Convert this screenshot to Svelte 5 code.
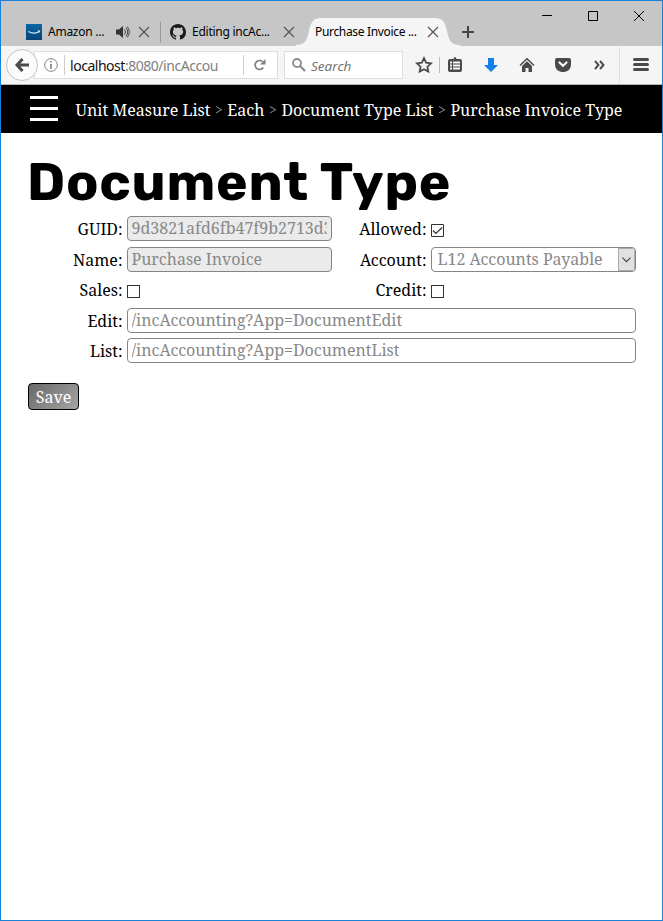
<script>
  const tabs = [
    { title: 'Amazon ...', kind: 'amazon' },
    { title: 'Editing incAc...', kind: 'github' },
    { title: 'Purchase Invoice ...', kind: 'active' }
  ];
  const crumbs = ['Unit Measure List', 'Each', 'Document Type List', 'Purchase Invoice Type'];
</script>

{#snippet cross()}
  <svg class="cross" width="12" height="12" viewBox="0 0 12 12"><path d="M1 1l10 10M11 1L1 11" stroke="#555" stroke-width="1.2" fill="none" /></svg>
{/snippet}

<div class="window">
  <div class="strip">
    {#each tabs as tab}
      <div class="tab {tab.kind}">
        {#if tab.kind === 'active'}
          <svg class="shape" width="164" height="29" viewBox="0 0 164 29"><path d="M0 29V28C9 28 11 23 13 14C15 4 18 1 25 1H139C146 1 149 4 151 14C153 23 155 28 164 28V29Z" fill="#f5f5f5" /></svg>
        {:else if tab.kind === 'amazon'}
          <svg class="fav" width="16" height="16" viewBox="0 0 16 16"><defs><linearGradient id="az" x2="0" y2="1"><stop stop-color="#0b66a6" /><stop offset="1" stop-color="#084475" /></linearGradient></defs><path d="M0 0h16v16H0z" fill="url(#az)" /><path d="M2.500 7.500q5.300 3.200 10.800.3M11.800 7.200l1.500 0-.3 1.200" fill="none" stroke="#d9f3fb" stroke-width="1.200" /></svg>
        {:else}
          <svg class="fav" width="16" height="16" viewBox="0 0 16 16"><path fill="#1b1b1b" d="M8 0C3.58 0 0 3.58 0 8c0 3.54 2.29 6.53 5.47 7.59.4.07.55-.17.55-.38 0-.19-.01-.82-.01-1.49-2.01.37-2.53-.49-2.69-.94-.09-.23-.48-.94-.82-1.13-.28-.15-.68-.52-.01-.53.63-.01 1.08.58 1.23.82.72 1.21 1.87.87 2.33.66.07-.52.28-.87.51-1.07-1.78-.2-3.64-.89-3.64-3.95 0-.87.31-1.59.82-2.15-.08-.2-.36-1.02.08-2.12 0 0 .67-.21 2.2.82.64-.18 1.32-.27 2-.27s1.36.09 2 .27c1.53-1.04 2.2-.82 2.2-.82.44 1.1.16 1.92.08 2.12.51.56.82 1.27.82 2.15 0 3.07-1.87 3.75-3.65 3.95.29.25.54.73.54 1.48 0 1.07-.01 1.93-.01 2.2 0 .21.15.46.55.38A8.01 8.01 0 0 0 16 8c0-4.42-3.58-8-8-8z" /></svg>
        {/if}
        <span class="title">{tab.title}</span>
        {#if tab.kind === 'amazon'}
          <svg class="sound" width="14" height="12" viewBox="0 0 14 12"><path d="M0 3.500h3L7 0v12L3 8.500H0z" fill="#333" /><path d="M8.500 3.500q2 2.500 0 5M10 1.800q3.500 4.200 0 8.400M11.300.7q4 5.300 0 10.600" fill="none" stroke="#444" /></svg>
        {/if}
        {@render cross()}
      </div>
    {/each}
    <svg class="plus" width="12" height="12" viewBox="0 0 12 12"><path d="M6 0v12M0 6h12" stroke="#444" stroke-width="2" /></svg>
    <div class="controls">
      <svg width="102" height="11" viewBox="0 0 102 11" fill="none" stroke="#000"><path d="M0 4.500h10M46.500.500h9v9h-9zM92 0l10 10M102 0L92 10" /></svg>
    </div>
  </div>

  <div class="toolbar">
    <div class="back"><svg width="14" height="14" viewBox="0 0 14 14"><path d="M7.500 1L2 7l5.500 6M2.500 7H14" fill="none" stroke="#4a4a4a" stroke-width="3" /></svg></div>
    <div class="address">
      <svg class="info" width="14" height="14" viewBox="0 0 14 14"><circle cx="7" cy="7" r="6.300" fill="none" stroke="#808080" /><path d="M7 3v1.600M7 6v5" stroke="#777" stroke-width="1.500" /></svg>
      <span class="url">localhost<i>:8080/incAccou</i></span>
      <svg class="reload" width="12" height="12" viewBox="0 0 12 12"><path d="M9.300 8.600A4.500 4.500 0 1 1 8.600 2.600" fill="none" stroke="#808080" stroke-width="1.700" /><path d="M11.500 0v5.500H6z" fill="#808080" /></svg>
    </div>
    <div class="search">
      <svg width="14" height="14" viewBox="0 0 14 14" fill="none" stroke="#8b8b8b"><circle cx="5" cy="5" r="4" stroke-width="1.800" /><path d="M8 8l5 5" stroke-width="2.300" /></svg>
      <span>Search</span>
    </div>
    <div class="icons">
      <svg width="252" height="38" viewBox="0 0 252 38">
        <path d="M19 12.200l2.100 4.500 4.900.6-3.600 3.400.9 4.900-4.300-2.400-4.300 2.400.9-4.900-3.600-3.400 4.900-.6z" fill="none" stroke="#4a4a4a" stroke-width="1.800" />
        <path d="M34.500 11v16" stroke="#bbb" />
        <path d="M45 13h3.500q.5-2 1.500-2t1.500 2H55q2 0 2 2v9q0 2-2 2H45q-2 0-2-2v-9q0-2 2-2z" fill="#4a4a4a" /><path d="M45 16.500h2M48 16.500h7M45 19.500h2M48 19.500h7M45 22.500h2M48 22.500h7" stroke="#f5f5f5" stroke-width="1.800" />
        <path d="M83 12h6v7h4l-7 7-7-7h4z" fill="#1581e8" />
        <path d="M115 19.500l7-6.800 7 6.800" fill="none" stroke="#4a4a4a" stroke-width="1.500" /><path d="M117 20l5-4.700 5 4.700v6h-3.500v-4h-3v4H117z" fill="#4a4a4a" />
        <path d="M152 12h12q2 0 2 2v4q0 6-5 7.500-3 1-6 0-5-1.500-5-7.500v-4q0-2 2-2z" fill="#4a4a4a" /><path d="M154.500 16.500l3.500 3.300 3.500-3.300" fill="none" stroke="#fff" stroke-width="2.200" stroke-linecap="round" />
        <path d="M190 15l3.500 4-3.500 4M195 15l3.500 4-3.500 4" fill="none" stroke="#4a4a4a" stroke-width="1.900" />
        <path d="M214.500 1v36" stroke="#ddd" />
        <path d="M229.500 13.500h13M229.500 18.500h13M229.500 23.500h13" stroke="#4a4a4a" stroke-width="3" stroke-linecap="round" />
      </svg>
    </div>
  </div>

  <nav>
    <svg width="28" height="26" viewBox="0 0 28 26"><path d="M0 1.500h28M0 12.500h28M0 23.500h28" stroke="#fff" stroke-width="3" /></svg>
    <div class="crumbs">
      {#each crumbs as crumb, i}{#if i}<span class="sep">&gt;</span>{/if}<span class="crumb">{crumb}</span>{/each}
    </div>
  </nav>

  <main>
    <h1>Document Type</h1>
    <div class="form">
      <span class="label">GUID:</span>
      <div class="field muted"><span class="clip">9d3821afd6fb47f9b2713d3</span></div>
      <span class="label">Allowed:</span>
      <div class="check"><svg width="13" height="13" viewBox="0 0 13 13" fill="none" stroke="#333"><path d="M.5.500h12v12H.500z" /><path d="M2 6.500l2.900 2.900L11.200 3.500" stroke-width="1.300" /></svg></div>

      <span class="label">Name:</span>
      <div class="field muted"><span class="clip">Purchase Invoice</span></div>
      <span class="label">Account:</span>
      <div class="field select"><span class="clip">L12 Accounts Payable</span><div class="arrow"><svg width="9" height="6" viewBox="0 0 9 6"><path d="M.5.700l4 4 4-4" fill="none" stroke="#444" stroke-width="1.200" /></svg></div></div>

      <span class="label raised">Sales:</span>
      <div class="check low"><div class="box"></div></div>
      <span class="label raised">Credit:</span>
      <div class="check low"><div class="box"></div></div>

      <span class="label">Edit:</span>
      <div class="field wide"><span class="clip">/incAccounting?App=DocumentEdit</span></div>
      <span class="label">List:</span>
      <div class="field wide"><span class="clip">/incAccounting?App=DocumentList</span></div>
    </div>
    <button>Save</button>
  </main>
</div>

<style>
  .window { box-sizing: border-box; width: 663px; height: 921px; border: 1px solid #1a82d6; background: #fff; font: 16px/24px "Noto Serif", "Droid Serif", "DejaVu Serif Condensed", "DejaVu Serif", serif; overflow: hidden; }
  svg { display: block; flex: none; }
  .strip { height: 45px; background: #c6c6c6; display: flex; align-items: flex-end; position: relative; }
  .tab { height: 28px; display: flex; align-items: center; box-sizing: border-box; font: 12px/16px "Noto Sans", "Open Sans", sans-serif; color: #000; position: relative; white-space: nowrap; letter-spacing: -.25px; }
  .tab .cross { margin-left: auto; }
  .amazon { width: 160px; padding: 0 11px 0 25px; }
  .amazon::after { content: ""; position: absolute; right: 0; top: 4px; height: 21px; border-right: 1px solid #999; }
  .fav { margin-right: 6px; }
  .amazon .sound { margin-left: 12px; }
  .github { width: 144px; padding: 0 10px 0 9px; }
  .active { width: 146px; padding: 0 12px 0 10px; letter-spacing: -.33px; }
  .shape { position: absolute; left: -9px; bottom: 0; }
  .active .title, .active .cross { position: relative; }
  .plus { margin: 0 0 8px 11px; }
  .controls { position: absolute; right: 18px; top: 10px; }
  .toolbar { height: 38px; border-bottom: 1px solid #b4b4b4; background: #f5f5f5; display: flex; align-items: center; position: relative; }
  .back { box-sizing: border-box; width: 32px; height: 32px; border: 1px solid #c4c4c4; border-radius: 50%; margin-left: 5px; display: flex; align-items: center; justify-content: center; background: #fbfbfb; z-index: 1; }
  .address { box-sizing: border-box; height: 28px; width: 244px; margin-left: -4px; border: 1px solid #dedede; background: #fff; display: flex; align-items: center; padding-left: 9px; }
  .info { margin-right: 6px; }
  .url { font: 14px/20px "Noto Sans", "Open Sans", sans-serif; color: #111; border-left: 1px solid #ccc; padding: 1px 0 0 5px; height: 19px; width: 173px; border-right: 1px solid #ccc; letter-spacing: -.47px; }
  .url i { font-style: normal; color: #808080; }
  .reload { margin-left: 10px; }
  .search { box-sizing: border-box; margin-left: 6px; width: 119px; height: 28px; border: 1px solid #dedede; background: #fff; display: flex; align-items: center; padding-left: 7px; gap: 5px; font: italic 13.5px/20px "Open Sans", sans-serif; color: #6c6c6c; }
  .search span { padding-top: 2px; }
  .icons { margin-left: 2px; }
  nav { height: 48px; background: #000; display: flex; align-items: center; padding-left: 29px; color: #fff; }
  .crumbs { margin-left: 17.5px; padding-top: 2px; display: flex; white-space: nowrap; }
  .sep { color: #888; font-size: 14px; width: 17px; text-align: center; }
  main { padding: 24px 26px 0 27px; }
  h1 { margin: 0 0 0 -1px; height: 59px; font: 700 53.3px/50px Rubik, Inter, sans-serif; letter-spacing: .77px; white-space: nowrap; color: #000; }
  .form { display: grid; grid-template-columns: 94px 205px 89px 205px; column-gap: 5px; grid-template-rows: 31px 31px 30px 30px 25px; }
  .label { text-align: right; line-height: 26px; color: #000; margin-right: -.5px; }
  .raised { line-height: 24px; }
  .field { box-sizing: border-box; height: 25px; border: 1px solid #858585; border-radius: 4px; color: #888; padding: 0 4px 0 3.500px; display: flex; line-height: 23px; overflow: hidden; }
  .clip { overflow: hidden; white-space: nowrap; }
  .muted { background: #ebebeb; }
  .wide { grid-column: 2 / 5; }
  .select { padding: 0 0 0 5.500px; justify-content: space-between; }
  .arrow { box-sizing: border-box; width: 17px; border: 1px solid #aaa; background: #e1e1e1; display: flex; align-items: center; justify-content: center; }
  .check { padding-top: 8px; }
  .low { padding-top: 7px; }
  .box { box-sizing: border-box; width: 13px; height: 13px; border: 1px solid #333; }
  button { display: block; margin: 20px 0 0; width: 51px; height: 27px; padding: 0; border: 1px solid #000; border-radius: 4px; background: linear-gradient(135deg, #696969, #a5a5a5); color: #fff; font: inherit; line-height: 24px; }
</style>
